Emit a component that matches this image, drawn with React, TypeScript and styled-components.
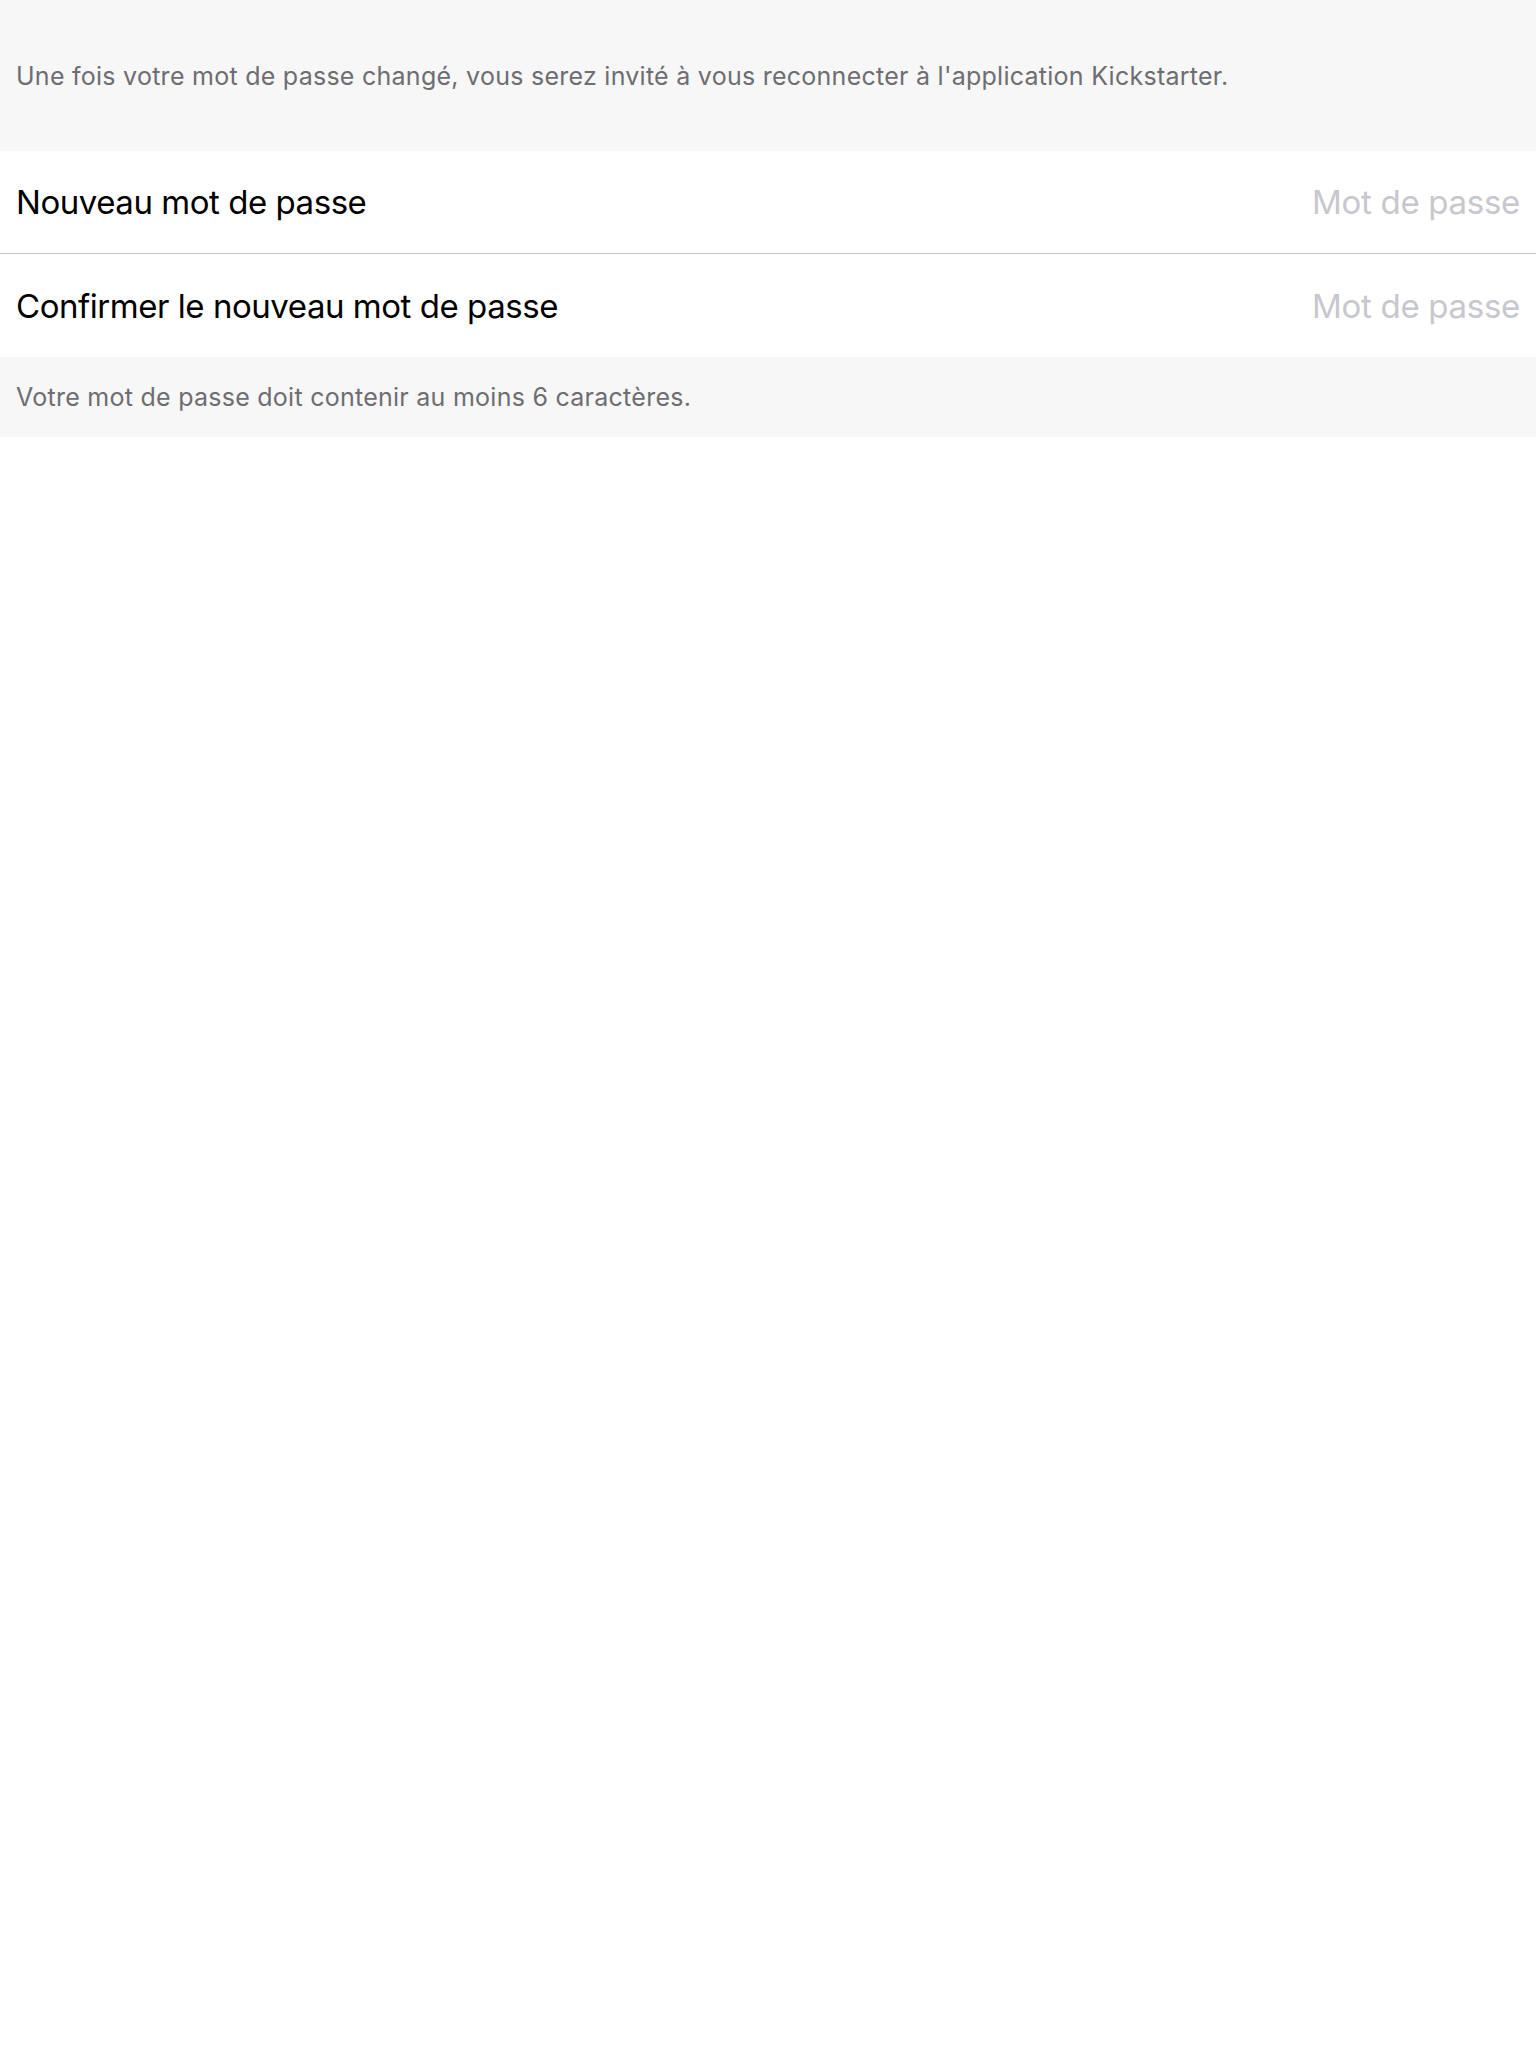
import React from "react";
import styled, { createGlobalStyle } from "styled-components";

const Global = createGlobalStyle`
  html, body { margin: 0; padding: 0; background: #ffffff; }
  body { font-family: Inter, "Noto Sans", "Liberation Sans", sans-serif; -webkit-font-smoothing: antialiased; }
`;

const Page = styled.div`
  display: flex;
  flex-direction: column;
  width: 1536px;
  min-height: 2048px;
  background: #ffffff;
`;

const Note = styled.div<{ $h: number }>`
  display: flex;
  align-items: center;
  height: ${(p) => p.$h}px;
  padding: 0 16px;
  background: #f7f7f7;
  color: #6d6d72;
  font-size: 25px;
  letter-spacing: 0.26px;
`;

const Group = styled.div`
  display: flex;
  flex-direction: column;
  background: #ffffff;
`;

const Row = styled.label<{ $h: number }>`
  display: flex;
  align-items: center;
  justify-content: space-between;
  height: ${(p) => p.$h}px;
  padding: 0 16px;
`;

const Label = styled.span`
  font-size: 33px;
  color: #000000;
  letter-spacing: -0.46px;
`;

const Field = styled.input`
  border: none;
  outline: none;
  background: transparent;
  text-align: right;
  width: 520px;
  padding: 0;
  font-family: inherit;
  font-size: 33px;
  letter-spacing: -0.3px;
  color: #000;
  &::placeholder { color: #c7c7cd; }
`;

const Divider = styled.div`
  height: 1px;
  background: #c8c7cc;
`;

export default function App() {
  return (
    <Page>
      <Global />
      <Note $h={151}>
        Une fois votre mot de passe changé, vous serez invité à vous reconnecter à l'application Kickstarter.
      </Note>
      <Group>
        <Row $h={102}>
          <Label>Nouveau mot de passe</Label>
          <Field type="password" placeholder="Mot de passe" />
        </Row>
        <Divider />
        <Row $h={103}>
          <Label>Confirmer le nouveau mot de passe</Label>
          <Field type="password" placeholder="Mot de passe" />
        </Row>
      </Group>
      <Note $h={80}>Votre mot de passe doit contenir au moins 6 caractères.</Note>
    </Page>
  );
}
